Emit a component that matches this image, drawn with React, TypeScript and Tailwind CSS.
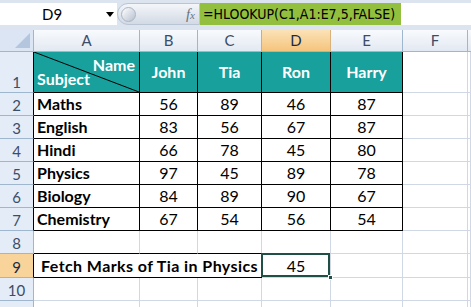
import React from "react";

const COLS = ["A", "B", "C", "D", "E", "F"];

const DATA: [string, number, number, number, number][] = [
  ["Maths", 56, 89, 46, 87],
  ["English", 83, 56, 67, 87],
  ["Hindi", 66, 78, 45, 80],
  ["Physics", 97, 45, 89, 78],
  ["Biology", 84, 89, 90, 67],
  ["Chemistry", 67, 54, 56, 54],
];

function RowHead({ n, active = false, dark = false }: { n?: number; active?: boolean; dark?: boolean }) {
  return (
    <div
      className={`flex items-end justify-center pb-[2px] text-[15px] border-b border-b-[#9eb6ce] border-r ${
        dark ? "border-r-black" : "border-r-[#9eb6ce]"
      } ${active ? "bg-[#f9d49a] text-[#1b2b45]" : "bg-[#e4ecf7] text-[#3b4d68]"}`}
    >
      {n}
    </div>
  );
}

function Grid() {
  return <div className="border-r border-b border-[#d0d7e5]" />;
}

export default function App() {
  return (
    <div
      className="w-[471px] h-[307px] overflow-hidden bg-white text-[16px] leading-none"
      style={{ fontFamily: "Lato, 'Liberation Sans', sans-serif" }}
    >
      {/* formula bar */}
      <div className="flex h-[30px] items-start bg-[#dbe4ef] pt-[3px]">
        <div className="relative flex h-[22px] w-[117px] items-center bg-white text-[15px]">
          <span className="ml-[42px] text-black">D9</span>
          <span className="absolute left-[106px] top-[9px] h-0 w-0 border-x-[4px] border-t-[5px] border-x-transparent border-t-black" />
        </div>
        <div className="relative flex h-[22px] w-[83px] items-center rounded-l-full bg-gradient-to-b from-[#f4f6f9] via-[#e3e8ef] to-[#d3dae4] border border-[#b9c5d5]">
          <span className="ml-[3px] h-[15px] w-[15px] rounded-full bg-gradient-to-br from-[#ffffff] to-[#b7c1cf] border border-[#a9b5c5]" />
          <span
            className="ml-auto mr-[4px] text-[15px] italic text-[#6a7280]"
            style={{ fontFamily: "'Liberation Serif', serif" }}
          >
            f<span className="text-[11px]">x</span>
          </span>
        </div>
        <div
          className="flex h-[22px] w-[201px] items-center overflow-hidden whitespace-nowrap bg-[#93bf3e] pl-[3px] text-[14px] text-black"
          style={{ fontFamily: "'Liberation Sans Narrow', 'DejaVu Sans Condensed', 'Roboto Condensed', Lato, sans-serif" }}
        >
          =HLOOKUP(C1,A1:E7,5,FALSE)
        </div>
        <div className="h-[22px] flex-1 bg-white" />
      </div>

      {/* sheet */}
      <div className="grid grid-cols-[34px_106px_58px_64px_69px_72px_65px_1fr] grid-rows-[22px_41px_repeat(7,23px)_24px_23px_23px]">
        {/* column headers */}
        <div className="relative border-r border-b border-[#9eb6ce] bg-[#dbe5f3]">
          <svg className="absolute right-[3px] bottom-[3px]" width="15" height="15" viewBox="0 0 15 15">
            <polygon points="15,0 15,15 0,15" fill="#b4c6de" />
          </svg>
        </div>
        {COLS.map((c) => (
          <div
            key={c}
            className={`flex items-center justify-center border-r border-b text-[15px] ${
              c === "D"
                ? "bg-gradient-to-b from-[#fbe2b6] to-[#f5c47c] border-r-[#d9b17a] border-b-[#f0a93c] text-[#1b2b45]"
                : "bg-gradient-to-b from-[#f8fafd] to-[#e3e9f2] border-[#9eb6ce] text-[#3b4d68]"
            }`}
          >
            {c}
          </div>
        ))}
        <div className="border-b border-[#9eb6ce] bg-gradient-to-b from-[#f8fafd] to-[#e3e9f2]" />

        {/* row 1: header */}
        <RowHead n={1} dark />
        <div className="relative border-r border-b border-black bg-[#17a09c] font-bold text-white">
          <svg className="absolute inset-0" width="105" height="40" viewBox="0 0 105 40" preserveAspectRatio="none">
            <line x1="0" y1="0" x2="105" y2="40" stroke="black" strokeWidth="1" />
          </svg>
          <span className="absolute right-[4px] top-[5px]">Name</span>
          <span className="absolute left-[3px] bottom-[5px]">Subject</span>
        </div>
        {["John", "Tia", "Ron", "Harry"].map((h) => (
          <div key={h} className="flex items-center justify-center border-r border-b border-black bg-[#17a09c] font-bold text-white">
            {h}
          </div>
        ))}
        <Grid />
        <Grid />

        {/* rows 2-7 */}
        {DATA.map((row, i) => (
          <React.Fragment key={row[0]}>
            <RowHead n={i + 2} dark />
            <div className="flex items-center border-r border-b border-black pl-[3px] font-bold text-black">{row[0]}</div>
            {row.slice(1).map((v, j) => (
              <div key={j} className="flex items-center justify-center border-r border-b border-black text-black">
                {v}
              </div>
            ))}
            <Grid />
            <Grid />
          </React.Fragment>
        ))}

        {/* row 8 */}
        <RowHead n={8} />
        <div className="border-r border-r-[#d0d7e5] border-b border-b-black" />
        <div className="border-r border-r-[#d0d7e5] border-b border-b-black" />
        <div className="border-r border-r-[#d0d7e5] border-b border-b-black" />
        <Grid />
        <Grid />
        <Grid />
        <Grid />

        {/* row 9 */}
        <RowHead n={9} active dark />
        <div className="col-span-3 flex items-center whitespace-nowrap border-r border-b border-black pl-[7px] font-bold tracking-[0.026em] text-black">
          Fetch Marks of Tia in Physics
        </div>
        <div className="relative flex items-center justify-center border-r border-b border-[#d0d7e5] text-black">
          45
          <div className="absolute -left-[1px] -top-[1px] right-0 bottom-0 border-2 border-[#1f4f45]" />
          <div className="absolute -right-[3px] -bottom-[3px] h-[5px] w-[5px] bg-[#1f4f45] border border-white" />
        </div>
        <Grid />
        <Grid />
        <Grid />

        {/* rows 10-11 */}
        {[10, undefined].map((n, k) => (
          <React.Fragment key={k}>
            <RowHead n={n} />
            <Grid />
            <Grid />
            <Grid />
            <Grid />
            <Grid />
            <Grid />
            <Grid />
          </React.Fragment>
        ))}
      </div>
    </div>
  );
}
